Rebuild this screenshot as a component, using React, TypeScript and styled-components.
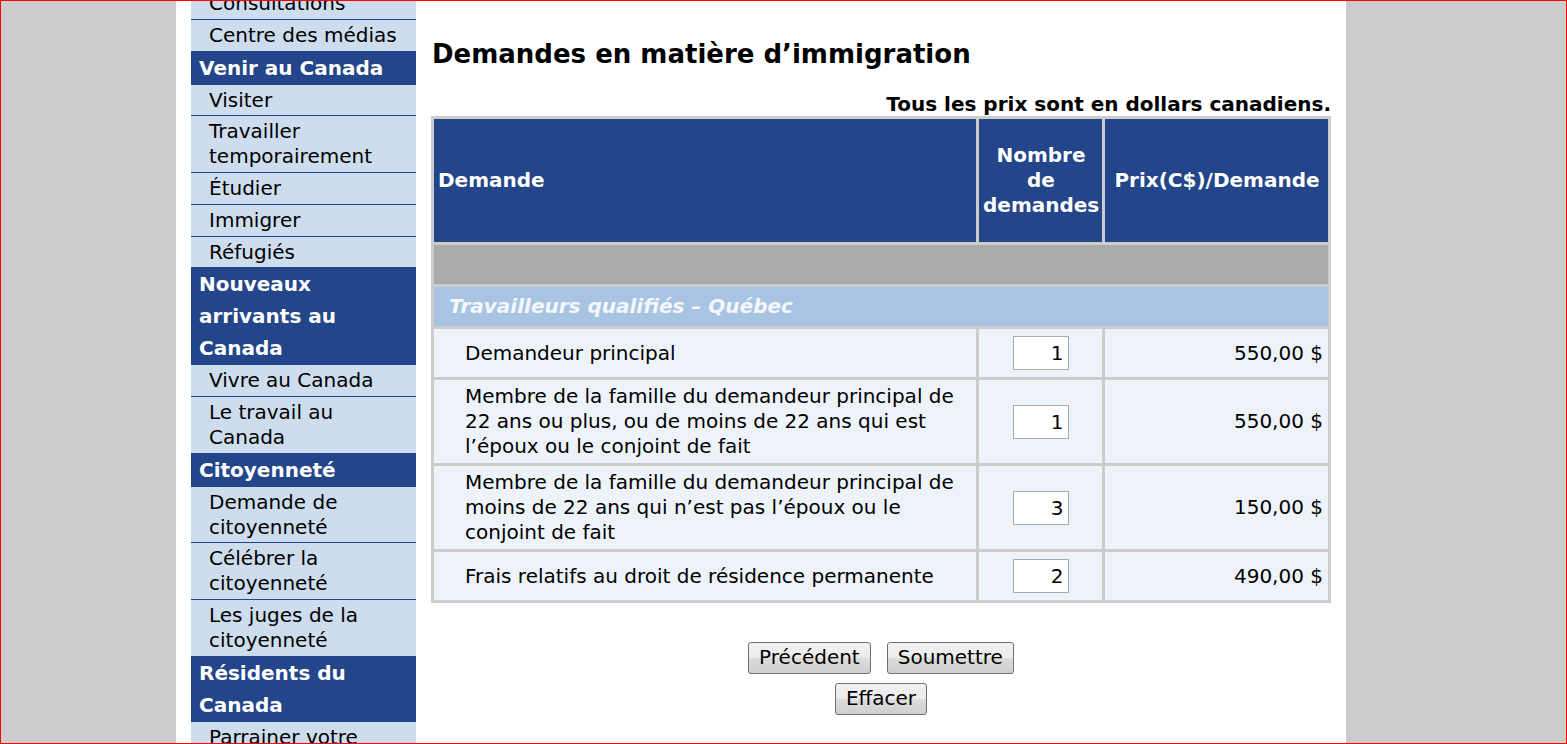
import React from "react";
import styled, { createGlobalStyle } from "styled-components";

const GlobalStyle = createGlobalStyle`
  html, body {
    margin: 0;
    padding: 0;
    background: #cccccc;
    font-family: "DejaVu Sans", Verdana, sans-serif;
    color: #000;
  }
`;

type NavEntry = { label: string; heading?: boolean };

const navEntries: NavEntry[] = [
  { label: "Consultations" },
  { label: "Centre des médias" },
  { label: "Venir au Canada", heading: true },
  { label: "Visiter" },
  { label: "Travailler temporairement" },
  { label: "Étudier" },
  { label: "Immigrer" },
  { label: "Réfugiés" },
  { label: "Nouveaux arrivants au Canada", heading: true },
  { label: "Vivre au Canada" },
  { label: "Le travail au Canada" },
  { label: "Citoyenneté", heading: true },
  { label: "Demande de citoyenneté" },
  { label: "Célébrer la citoyenneté" },
  { label: "Les juges de la citoyenneté" },
  { label: "Résidents du Canada", heading: true },
  { label: "Parrainer votre famille" },
  { label: "Protéger votre statut" },
];

type FeeRow = { label: string; count: number; price: string };

const feeRows: FeeRow[] = [
  { label: "Demandeur principal", count: 1, price: "550,00 $" },
  {
    label:
      "Membre de la famille du demandeur principal de 22 ans ou plus, ou de moins de 22 ans qui est l’époux ou le conjoint de fait",
    count: 1,
    price: "550,00 $",
  },
  {
    label:
      "Membre de la famille du demandeur principal de moins de 22 ans qui n’est pas l’époux ou le conjoint de fait",
    count: 3,
    price: "150,00 $",
  },
  {
    label: "Frais relatifs au droit de résidence permanente",
    count: 2,
    price: "490,00 $",
  },
];

export default function App() {
  return (
    <>
      <GlobalStyle />
      <Frame>
        <Column>
          <Nav>
            {navEntries.map((entry) =>
              entry.heading ? (
                <NavHeading key={entry.label}>{entry.label}</NavHeading>
              ) : (
                <NavLink key={entry.label}>{entry.label}</NavLink>
              )
            )}
          </Nav>
          <Main>
            <Title>Demandes en matière d’immigration</Title>
            <Note>Tous les prix sont en dollars canadiens.</Note>
            <FeeTable>
              <colgroup>
                <col style={{ width: 542 }} />
                <col style={{ width: 123 }} />
                <col style={{ width: 223 }} />
              </colgroup>
              <thead>
                <tr>
                  <HeadCell $align="left">Demande</HeadCell>
                  <HeadCell $align="center">Nombre de demandes</HeadCell>
                  <HeadCell $align="center">Prix(C$)/Demande</HeadCell>
                </tr>
              </thead>
              <tbody>
                <tr>
                  <SpacerCell colSpan={3} />
                </tr>
                <tr>
                  <SectionCell colSpan={3}>Travailleurs qualifiés – Québec</SectionCell>
                </tr>
                {feeRows.map((row) => (
                  <tr key={row.label}>
                    <LabelCell>{row.label}</LabelCell>
                    <CountCell>
                      <CountInput defaultValue={row.count} />
                    </CountCell>
                    <PriceCell>{row.price}</PriceCell>
                  </tr>
                ))}
              </tbody>
            </FeeTable>
            <Actions>
              <ButtonRow>
                <FormButton type="button">Précédent</FormButton>
                <FormButton type="button">Soumettre</FormButton>
              </ButtonRow>
              <ButtonRow>
                <FormButton type="button">Effacer</FormButton>
              </ButtonRow>
            </Actions>
          </Main>
        </Column>
      </Frame>
    </>
  );
}

const Frame = styled.div`
  height: 100vh;
  box-sizing: border-box;
  border: 1px solid #ff0000;
  overflow: hidden;
  background: #cccccc;
  display: flex;
  align-items: stretch;
`;

const Column = styled.div`
  margin-left: 175px;
  width: 1170px;
  box-sizing: border-box;
  padding: 0 15px;
  background: #ffffff;
  display: flex;
  gap: 15px;
  align-items: flex-start;
`;

const Nav = styled.nav`
  width: 225px;
  flex-shrink: 0;
  margin-top: -13px;
  background: #cddded;
  display: flex;
  flex-direction: column;
`;

const NavLink = styled.div`
  padding: 3px 6px 3px 18px;
  line-height: 24.8px;
  font-size: 20px;
  color: #000;
  border-bottom: 1px solid #234589;
`;

const NavHeading = styled.div`
  padding: 0 6px 0 8px;
  line-height: 32px;
  font-size: 20px;
  font-weight: bold;
  color: #ffffff;
  background: #234589;
  border-bottom: 1px solid #234589;
`;

const Main = styled.main`
  width: 900px;
  flex-shrink: 0;
  padding-top: 38px;
`;

const Title = styled.h1`
  margin: 0;
  font-size: 26px;
  line-height: 30px;
  font-weight: bold;
  padding-left: 1px;
`;

const Note = styled.div`
  margin-top: 23px;
  text-align: right;
  font-size: 20px;
  line-height: 24px;
  font-weight: bold;
`;

const FeeTable = styled.table`
  width: 900px;
  table-layout: fixed;
  border-collapse: separate;
  border-spacing: 3px;
  background: #cccccc;
  font-size: 20px;
`;

const HeadCell = styled.th<{ $align: "left" | "center" }>`
  background: #234589;
  color: #ffffff;
  font-weight: bold;
  line-height: 25px;
  padding: 24px 3px 24px 4px;
  text-align: ${(p) => p.$align};
  vertical-align: middle;
`;

const SpacerCell = styled.td`
  background: #aaaaaa;
  height: 39px;
  padding: 0;
`;

const SectionCell = styled.td`
  background: #a8c4e2;
  color: #f4f7fc;
  font-weight: bold;
  font-style: italic;
  line-height: 25px;
  padding: 7px 15px;
`;

const LabelCell = styled.td`
  background: #eef3fa;
  line-height: 25px;
  padding: 4px 12px 4px 31px;
  vertical-align: middle;
`;

const CountCell = styled.td`
  background: #eef3fa;
  padding: 4px 0;
  text-align: center;
  vertical-align: middle;
`;

const PriceCell = styled.td`
  background: #eef3fa;
  line-height: 25px;
  padding: 4px 5px;
  text-align: right;
  vertical-align: middle;
`;

const CountInput = styled.input`
  display: block;
  margin: 3px auto;
  width: 56px;
  height: 34px;
  box-sizing: border-box;
  border: 1px solid #aaaaaa;
  padding: 0 4px;
  font-family: "DejaVu Sans", Verdana, sans-serif;
  font-size: 20px;
  text-align: right;
  color: #000;
  background: #fff;
`;

const Actions = styled.div`
  margin-top: 39px;
  display: flex;
  flex-direction: column;
  align-items: center;
  gap: 9px;
`;

const ButtonRow = styled.div`
  display: flex;
  gap: 16px;
  justify-content: center;
`;

const FormButton = styled.button`
  font-family: "DejaVu Sans", Verdana, sans-serif;
  font-size: 20px;
  line-height: 25px;
  padding: 2px 10px 3px;
  color: #000;
  border: 1px solid #707070;
  border-radius: 3px;
  background: linear-gradient(#f2f2f2, #ebebeb 50%, #dddddd 50%, #cfcfcf);
`;
